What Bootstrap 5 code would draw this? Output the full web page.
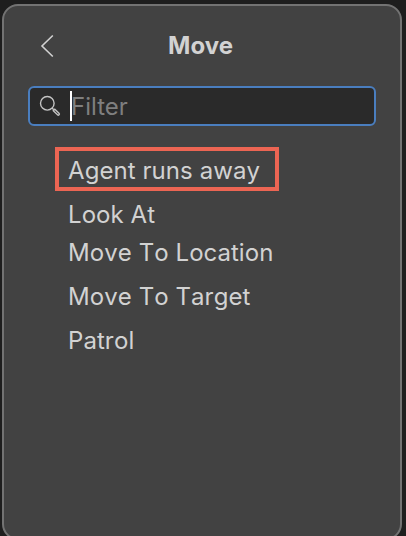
<!DOCTYPE html>
<html lang="en">
<head>
<meta charset="utf-8">
<meta name="viewport" content="width=device-width, initial-scale=1">
<title>Move</title>
<link href="https://cdn.jsdelivr.net/npm/bootstrap@5.3.0/dist/css/bootstrap.min.css" rel="stylesheet">
<style>
html, body { height: 536px; overflow: hidden; }
body { background: #1e1e1e; font-family: Inter, "Liberation Sans", sans-serif; font-optical-sizing: none; font-size: 24px; color: #d2d2d2; padding: 4px 4px 0 2px; }
.node-panel { height: 536px; background: #424242; border: 2px solid #737373; border-radius: 16px; padding: 0 24px; }
.panel-head { height: 80px; }
.back-btn { width: 36px; color: #d2d2d2; line-height: 0; padding: 0 0 0 12px; text-align: left; }
.panel-title { font-size: 24px; font-weight: 700; line-height: 44px; padding-right: 39px; }
.filter-box { height: 40px; background: #2a2a2a; border: 2px solid #4a7ebf; border-radius: 6px; padding-left: 9px; }
.filter-box .caret { width: 2px; height: 30px; background: #fff; margin-left: 9px; }
.filter-box .form-control { font-size: 24px; line-height: 36px; color: #d2d2d2; padding-top: 1px !important; margin-left: -1px; }
.filter-box .form-control::placeholder { color: #7f7f7f; opacity: 1; }
.node-list { margin: 21px 0 0 27px; font-kerning: none; }
.node-item { height: 44px; line-height: 46px; padding-left: 13px; white-space: nowrap; letter-spacing: .07px; }
.node-item.tight { height: 38px; }
.node-item.marked { width: 224px; border: 4px solid #ec6553; padding-left: 9px; line-height: 40px; margin-bottom: 1px; }
</style>
<script defer src="https://cdn.jsdelivr.net/npm/bootstrap@5.3.0/dist/js/bootstrap.bundle.min.js"></script>
</head>
<body>
<main class="node-panel">
  <header class="panel-head d-flex align-items-center">
    <button class="back-btn btn border-0" type="button" aria-label="Back">
      <svg width="14" height="24" viewBox="0 0 14 24" fill="none" stroke="currentColor" stroke-width="1.6"><path d="M12.8 1.5 2 12l10.8 10.5"/></svg>
    </button>
    <h1 class="panel-title flex-grow-1 text-center m-0">Move</h1>
  </header>
  <div class="filter-box d-flex align-items-center">
    <svg class="flex-shrink-0" width="22" height="22" viewBox="0 0 22 22" fill="none" stroke="#c4c4c4" stroke-width="1.4"><circle cx="8.3" cy="8.3" r="6.8"/><path d="m13 13 1.8 1.8"/><path d="m14.3 15.7 1.5-1.5 4.2 4a1 1 0 0 1-1.5 1.6z"/></svg>
    <span class="caret flex-shrink-0"></span>
    <input class="form-control bg-transparent border-0 shadow-none p-0" type="text" placeholder="Filter" aria-label="Filter">
  </div>
  <ul class="node-list list-unstyled">
    <li class="node-item marked">Agent runs away</li>
    <li class="node-item tight">Look At</li>
    <li class="node-item">Move To Location</li>
    <li class="node-item">Move To Target</li>
    <li class="node-item">Patrol</li>
  </ul>
</main>
</body>
</html>
